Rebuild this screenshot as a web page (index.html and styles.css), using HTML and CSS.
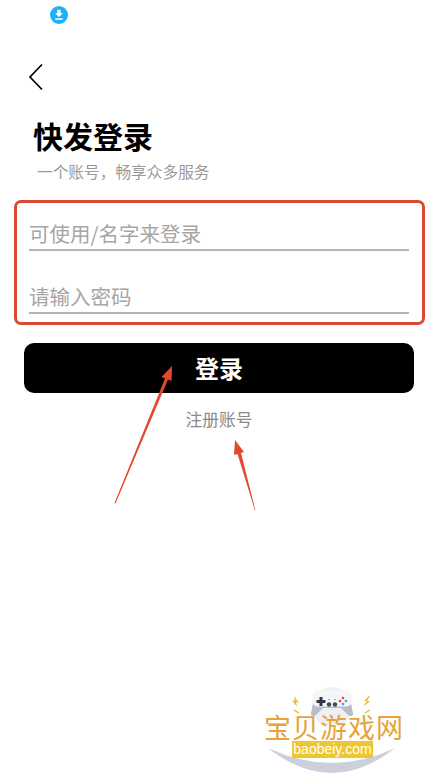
FILE: index.html
```html
<!DOCTYPE html>
<html lang="zh-CN">
<head>
    <meta charset="UTF-8">
    <meta name="viewport" content="width=device-width, initial-scale=1.0">
    <title>快发登录</title>
    <link rel="stylesheet" href="styles.css">
</head>
<body>
<div class="status-bar">
	<svg class="download-icon" width="18" height="18" viewBox="0 0 18 18">
		<circle cx="9" cy="9" r="9" fill="#1fb1f5"/>
		<path d="M7.300 3.800h3.400v3.400h2.200L9 11 5.100 7.200h2.200z" fill="#fff"/>
		<rect x="5.300" y="12.300" width="7.400" height="1.500" fill="#fff"/>
	</svg>
</div>
<nav class="nav-box">
	<svg class="back-icon" width="16" height="28" viewBox="0 0 16 28">
		<path d="M14 1.500 2 14l12 12.500" fill="none" stroke="#000" stroke-width="1.700"/>
	</svg>
</nav>
<header class="head-box">
	<h1 class="head-title">快发登录</h1>
	<p class="head-sub">一个账号&#xFF0C;畅享众多服务</p>
</header>
<form class="login-form">
	<div class="input-box">
		<div class="input-row">可使用/名字来登录</div>
		<div class="input-row">请输入密码</div>
	</div>
	<div class="login-btn">登录</div>
	<div class="register-link">注册账号</div>
</form>

<!-- 标注箭头 -->
<svg class="arrow-layer" width="438" height="779" viewBox="0 0 438 779">
	<path d="M172 366l-.5 15-3.500-1.500L115.500 503.500l-1-.5L165 378.500l-3.500-1.500z" fill="#e2482d"/>
	<path d="M235 440l9 12-3 1 14.500 57.500h-.5L237.500 454l-3.500 1z" fill="#e2482d"/>
</svg>

<!-- 水印 -->
<div class="watermark">
	<svg class="wm-art" width="150" height="92" viewBox="0 0 150 92">
		<circle cx="74" cy="22" r="20" fill="#eef0f4"/>
		<path d="M60 12h28c3 0 4 3 5 7l2 9c1 3-3 4-5 2l-7-7H65l-7 7c-2 2-6 1-5-2l2-9c1-4 2-7 5-7z" fill="#b9bdc8"/>
		<path d="M60 5.500h28c4 0 6 4 6 9 0 4-2 7-6 7H60c-4 0-6-3-6-7 0-5 2-9 6-9z" fill="#f6f6f8"/>
		<path d="M61.500 12h3v3h3v3h-3v3h-3v-3h-3v-3h3z" fill="#2c3a4a"/>
		<circle cx="71" cy="19.500" r="2.200" fill="#3d4a5a"/>
		<circle cx="77" cy="19.500" r="2.200" fill="#3d4a5a"/>
		<rect x="70" y="14" width="2" height="1" fill="#e58a94"/>
		<rect x="76" y="14" width="2" height="1" fill="#e58a94"/>
		<circle cx="85" cy="13" r="1.300" fill="#e8434c"/>
		<circle cx="88" cy="16" r="1.300" fill="#3aa5e0"/>
		<circle cx="85" cy="19" r="1.300" fill="#3aa5e0"/>
		<circle cx="82" cy="16" r="1.300" fill="#e8434c"/>
		<path d="M36 11l1 5-3-1 5 7-1-5 3 1zM111 11l-5 5 3 0-4 6 7-6h-3l3-5z" fill="#eeb32f"/>
		<path d="M36 25l5 3M112 25l-5 3" stroke="#eeb32f" stroke-width="1.200"/>
		<path d="M10 63Q74 113 137 63Q74 93 10 63z" fill="#ccd0da"/>
	</svg>
	<div class="wm-name">宝贝游戏网</div>
	<div class="wm-url">baobeiy.com</div>
</div>
</body>
</html>
```

FILE: styles.css
```css
*{
	padding:0;margin:0;
	box-sizing:border-box;
}
body{
	width:438px;height:779px;
	overflow:hidden;
	position:relative;
	background:#fff;
	font-family:"Noto Sans CJK SC","Noto Sans",sans-serif;
}

.status-bar{
	height:24px;
	padding:6px 0 0 50px;
}
.download-icon{display:block;}

.nav-box{
	height:26px;
	margin-top:39px;
	padding-left:28px;
}
.back-icon{display:block;}

.head-box{
	margin-top:24px;
	padding-left:33px;
}
.head-title{
	font-size:30px;
	line-height:44px;
	font-weight:700;
	color:#000;
}
.head-sub{
	padding-left:4px;
	margin-top:4px;
	font-size:15.700px;
	line-height:22px;
	color:#999;
}

.login-form{
	margin-top:17px;
	padding:0 14px;
}
.input-box{
	width:411px;
	height:125px;
	border:3px solid #d94a32;
	border-radius:7px;
	padding:0 13px 0 12px;
}
.input-row{
	height:63px;
	padding-top:29px;
	border-bottom:2px solid #b4b4b4;
	font-size:20.500px;
	line-height:32px;
	color:#a6a6a6;
}
.input-row:first-child{height:48px;padding-top:14px;}

.login-btn{
	width:390px;
	height:50px;
	margin:18px 0 0 10px;
	background:#000;
	border-radius:10px;
	color:#fff;
	font-size:24px;
	font-weight:700;
	line-height:49px;
	text-align:center;
}
.register-link{
	margin:13px 0 0 10px;
	width:390px;
	text-align:center;
	font-size:16.800px;
	line-height:26px;
	color:#8a8a8a;
}

.arrow-layer{
	position:absolute;
	top:0;left:0;
}

.watermark{
	position:absolute;
	left:258px;
	top:685px;
	width:150px;
	height:92px;
}
.wm-art{display:block;}
.wm-name{
	position:absolute;
	left:6px;
	top:28px;
	font-size:27px;
	line-height:28px;
	letter-spacing:1px;
	white-space:nowrap;
	color:#e9a23a;
}
.wm-url{
	position:absolute;
	left:34px;
	top:56px;
	width:81px;
	height:17px;
	background:#eec62f;
	color:#fff;
	font-family:"Liberation Sans",sans-serif;
	font-size:14px;
	line-height:17px;
	text-align:center;
}
```
